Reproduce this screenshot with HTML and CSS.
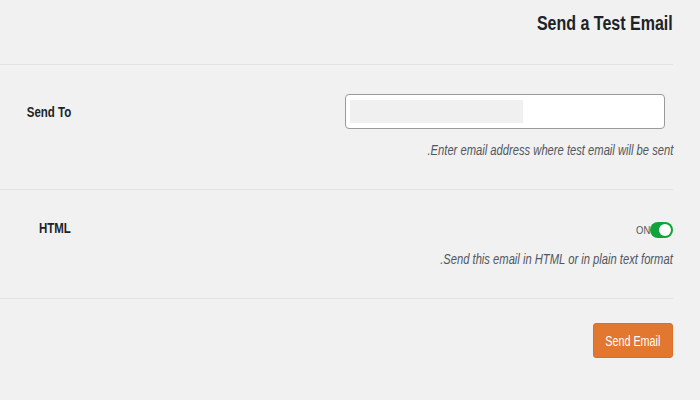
FILE: index.html
```html
<!DOCTYPE html>
<html lang="en">
<head>
<meta charset="utf-8">
<title>Send a Test Email</title>
<link rel="stylesheet" href="styles.css">
</head>
<body>
<div class="page">
  <header class="head">
    <h1 class="title"><span class="narrow narrow-title">Send a Test Email</span></h1>
  </header>
  <div class="row row-to">
    <div class="label"><span class="narrow">Send To</span></div>
    <div class="field">
      <div class="input"><span class="filled"></span></div>
      <p class="desc"><span class="narrow narrow-desc">.Enter email address where test email will be sent</span></p>
    </div>
  </div>
  <div class="row row-html">
    <div class="label"><span class="narrow">HTML</span></div>
    <div class="field">
      <div class="toggle-line">
        <span class="on"><span class="narrow">ON</span></span>
        <span class="switch"><span class="knob"></span></span>
      </div>
      <p class="desc"><span class="narrow narrow-desc">.Send this email in HTML or in plain text format</span></p>
    </div>
  </div>
  <div class="actions">
    <button class="btn"><span class="narrow narrow-btn">Send Email</span></button>
  </div>
</div>
</body>
</html>
```

FILE: styles.css
```css
html, body {
  margin: 0;
  padding: 0;
  background: #f1f1f1;
}
body {
  font-family: "Liberation Sans", Arial, sans-serif;
  color: #1d2327;
}
.narrow {
  display: inline-block;
  white-space: nowrap;
  transform: scaleX(0.82);
  transform-origin: right center;
}
.narrow-title {
  transform: scaleX(0.8);
}
.narrow-desc {
  transform: scaleX(0.8);
}
.narrow-btn {
  transform: scaleX(0.77);
  transform-origin: center center;
}
.page {
  width: 673px;
}
.head {
  padding-top: 11px;
  padding-bottom: 28px;
  text-align: right;
}
.title {
  margin: 0;
  font-size: 20px;
  line-height: 25px;
  font-weight: bold;
  color: #1d2327;
}
.row {
  display: flex;
  border-top: 1px solid #e3e3e3;
}
.label {
  width: 71px;
  flex: none;
  text-align: right;
  font-size: 14px;
  line-height: 20px;
  font-weight: bold;
  color: #1d2327;
}
.field {
  flex: 1;
  display: flex;
  flex-direction: column;
  align-items: flex-end;
}
.row-to .label { padding-top: 37px; }
.row-to .field { padding-top: 29px; padding-bottom: 29px; }
.input {
  box-sizing: border-box;
  width: 320px;
  height: 35px;
  margin-right: 8px;
  background: #fff;
  border: 1px solid #9a9a9a;
  border-radius: 4px;
  padding: 5px 4px;
  display: flex;
}
.filled {
  width: 173px;
  height: 23px;
  background: #f0f0f0;
}
.desc {
  margin: 11px 0 0;
  font-size: 14px;
  line-height: 20px;
  font-style: italic;
  color: #50575e;
}
.row-html .label { padding-top: 28px; }
.row-html .field { padding-top: 32px; padding-bottom: 29px; }
.toggle-line {
  display: flex;
  align-items: center;
  height: 16px;
}
.on {
  font-size: 11.5px;
  color: #50575e;
}
.switch {
  box-sizing: border-box;
  width: 23px;
  height: 16px;
  border-radius: 8px;
  background: #11a33b;
  display: flex;
  align-items: center;
  justify-content: flex-end;
  padding-right: 2px;
}
.knob {
  width: 12px;
  height: 12px;
  border-radius: 50%;
  background: #fff;
}
.actions {
  border-top: 1px solid #e3e3e3;
  padding-top: 24px;
  display: flex;
  justify-content: flex-end;
}
.btn {
  width: 80px;
  height: 35px;
  border: 1px solid #dc6f28;
  border-radius: 3px;
  background: #e27730;
  color: #fff;
  font-family: inherit;
  font-size: 14px;
  padding: 0;
  cursor: pointer;
}
```
